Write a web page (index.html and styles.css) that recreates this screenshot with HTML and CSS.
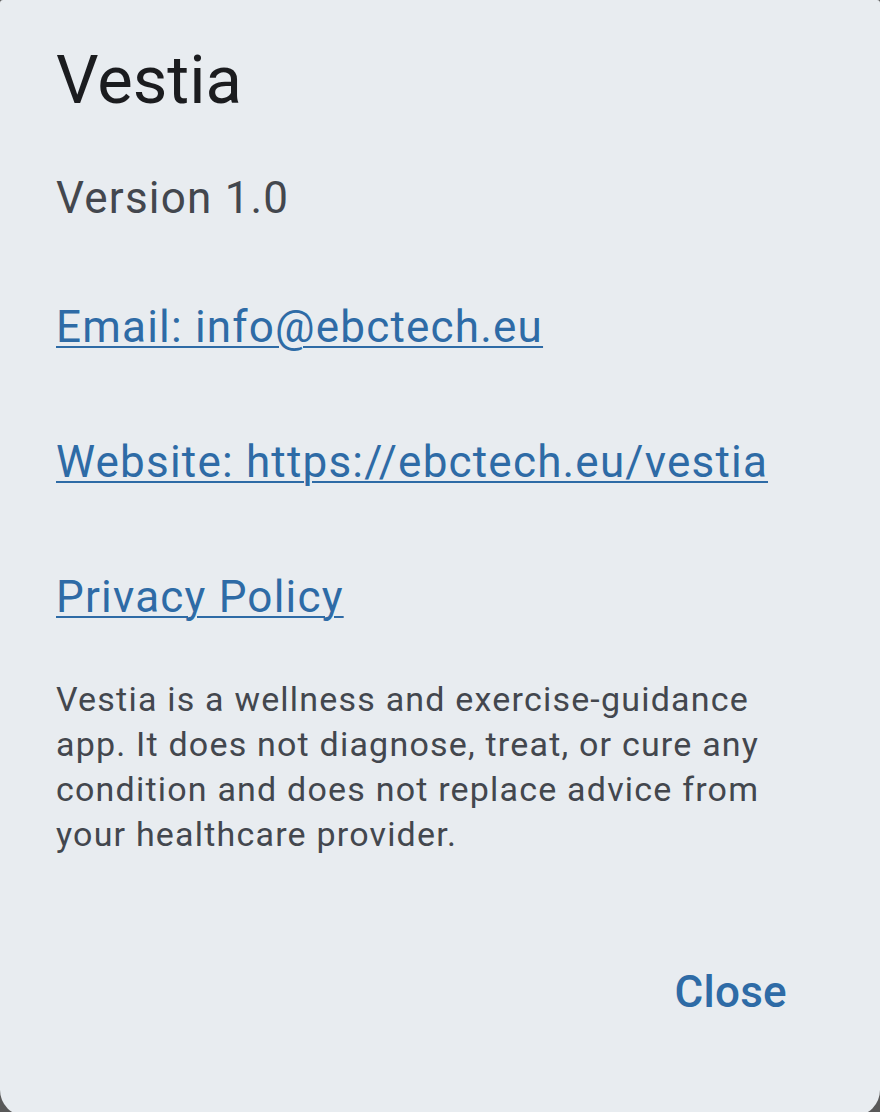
FILE: index.html
```html
<!DOCTYPE html>
<html lang="en">
<head>
  <meta charset="UTF-8">
  <title>About Vestia</title>
  <link rel="stylesheet" href="styles.css">
</head>
<body>
  <div class="dialog" role="dialog" aria-labelledby="aboutTitle">
    <h1 id="aboutTitle" class="dialog-title">Vestia</h1>
    <p class="version">Version 1.0</p>
    <ul class="links">
      <li><a href="mailto:info@ebctech.eu">Email: info@ebctech.eu</a></li>
      <li><a href="https://ebctech.eu/vestia">Website: https://ebctech.eu/vestia</a></li>
      <li><a href="#privacy">Privacy Policy</a></li>
    </ul>
    <p class="disclaimer">Vestia is a wellness and exercise-guidance app. It does not diagnose, treat, or cure any condition and does not replace advice from your healthcare provider.</p>
    <div class="actions">
      <button type="button" class="text-btn">Close</button>
    </div>
  </div>
</body>
</html>
```

FILE: styles.css
```css
:root {
  --scrim: #595959;
  --surface: #e8ecf0;
  --on-surface: #1b1c1f;
  --on-variant: #43474e;
  --primary: #2e6ba6;
}

html, body {
  margin: 0;
  height: 1112px;
  overflow: hidden;
}

body {
  background: var(--scrim);
  font-family: Roboto, "Noto Sans", sans-serif;
}

.dialog {
  box-sizing: border-box;
  height: 1116px;
  padding: 40px 56px 0;
  background: var(--surface);
  border-radius: 3px 3px 26px 26px;
}

.dialog-title {
  margin: 0;
  font-size: 67px;
  line-height: 80px;
  font-weight: 400;
  color: var(--on-surface);
}

.version {
  margin: 50px 0 0;
  font-size: 44px;
  line-height: 56px;
  letter-spacing: 1.2px;
  color: var(--on-variant);
}

.links {
  list-style: none;
  margin: 73px 0 0;
  padding: 0;
  display: flex;
  flex-direction: column;
  gap: 79px;
}

.links li {
  font-size: 44px;
  line-height: 56px;
  letter-spacing: 1.2px;
}

.links a {
  color: var(--primary);
  text-decoration: underline;
  text-decoration-thickness: 2px;
  text-underline-offset: 4px;
}

.disclaimer {
  margin: 52px 0 0;
  font-size: 34px;
  line-height: 45px;
  letter-spacing: 1.2px;
  color: var(--on-variant);
}

.actions {
  display: flex;
  justify-content: flex-end;
  margin-top: 107px;
  padding-right: 37px;
}

.text-btn {
  padding: 0;
  border: none;
  background: none;
  font-family: inherit;
  font-size: 44px;
  line-height: 56px;
  font-weight: 500;
  letter-spacing: 0.3px;
  color: var(--primary);
  cursor: pointer;
}
```
